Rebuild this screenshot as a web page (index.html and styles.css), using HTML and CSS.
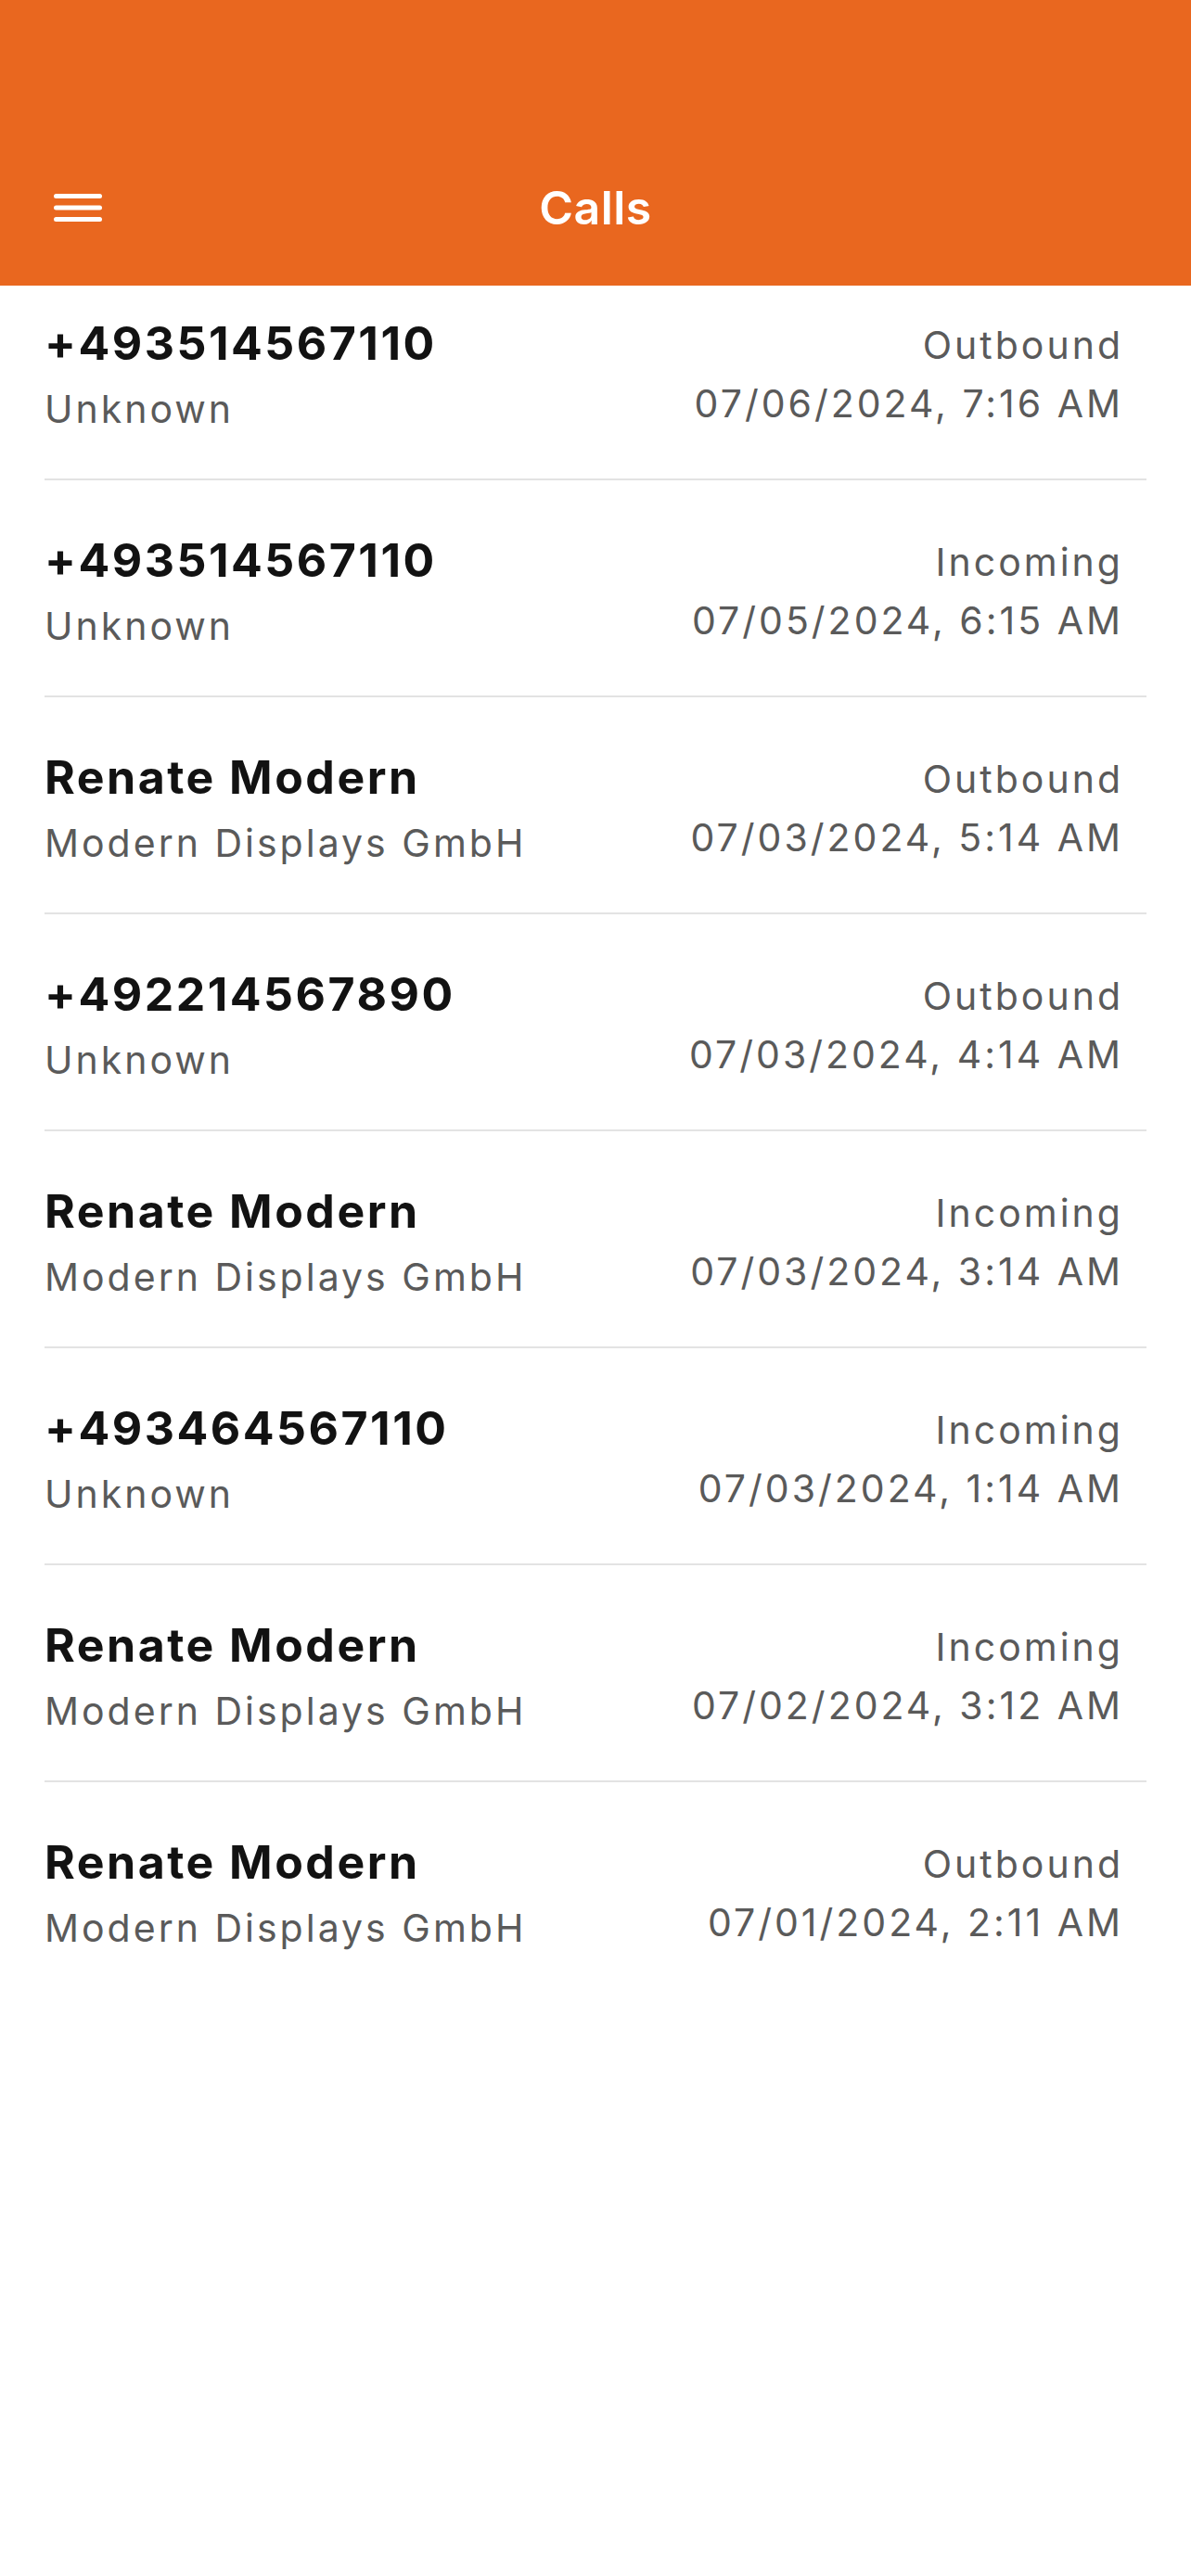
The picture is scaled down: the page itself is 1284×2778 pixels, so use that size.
FILE: index.html
```html
<!DOCTYPE html>
<html lang="en">
<head>
  <meta charset="UTF-8">
  <meta name="viewport" content="width=device-width, initial-scale=1.0">
  <title>Calls</title>
  <link rel="stylesheet" href="styles.css">
</head>
<body>
  <div class="app">
    <header class="toolbar">
      <div class="toolbar-inner">
        <button class="menu-btn" aria-label="Menu">
          <svg viewBox="0 0 52 30" width="52" height="30">
            <line x1="2.5" y1="2.5" x2="49.5" y2="2.5" />
            <line x1="2.5" y1="15" x2="49.5" y2="15" />
            <line x1="2.5" y1="27.5" x2="49.5" y2="27.5" />
          </svg>
        </button>
        <h1 class="title">Calls</h1>
      </div>
    </header>

    <!-- call log -->
    <div class="call-list">
      <div class="call-item">
        <div class="call-main">
          <div class="call-name">+493514567110</div>
          <div class="call-sub">Unknown</div>
        </div>
        <div class="call-meta">
          <div class="call-dir">Outbound</div>
          <div class="call-date">07/06/2024, 7:16 AM</div>
        </div>
      </div>
      <div class="call-item">
        <div class="call-main">
          <div class="call-name">+493514567110</div>
          <div class="call-sub">Unknown</div>
        </div>
        <div class="call-meta">
          <div class="call-dir">Incoming</div>
          <div class="call-date">07/05/2024, 6:15 AM</div>
        </div>
      </div>
      <div class="call-item">
        <div class="call-main">
          <div class="call-name">Renate Modern</div>
          <div class="call-sub">Modern Displays GmbH</div>
        </div>
        <div class="call-meta">
          <div class="call-dir">Outbound</div>
          <div class="call-date">07/03/2024, 5:14 AM</div>
        </div>
      </div>
      <div class="call-item">
        <div class="call-main">
          <div class="call-name">+492214567890</div>
          <div class="call-sub">Unknown</div>
        </div>
        <div class="call-meta">
          <div class="call-dir">Outbound</div>
          <div class="call-date">07/03/2024, 4:14 AM</div>
        </div>
      </div>
      <div class="call-item">
        <div class="call-main">
          <div class="call-name">Renate Modern</div>
          <div class="call-sub">Modern Displays GmbH</div>
        </div>
        <div class="call-meta">
          <div class="call-dir">Incoming</div>
          <div class="call-date">07/03/2024, 3:14 AM</div>
        </div>
      </div>
      <div class="call-item">
        <div class="call-main">
          <div class="call-name">+493464567110</div>
          <div class="call-sub">Unknown</div>
        </div>
        <div class="call-meta">
          <div class="call-dir">Incoming</div>
          <div class="call-date">07/03/2024, 1:14 AM</div>
        </div>
      </div>
      <div class="call-item">
        <div class="call-main">
          <div class="call-name">Renate Modern</div>
          <div class="call-sub">Modern Displays GmbH</div>
        </div>
        <div class="call-meta">
          <div class="call-dir">Incoming</div>
          <div class="call-date">07/02/2024, 3:12 AM</div>
        </div>
      </div>
      <div class="call-item last">
        <div class="call-main">
          <div class="call-name">Renate Modern</div>
          <div class="call-sub">Modern Displays GmbH</div>
        </div>
        <div class="call-meta">
          <div class="call-dir">Outbound</div>
          <div class="call-date">07/01/2024, 2:11 AM</div>
        </div>
      </div>
    </div>
  </div>
</body>
</html>
```

FILE: styles.css
```css
* { margin: 0; padding: 0; box-sizing: border-box; }
body { background-color: #ffffff; font-family: Inter, 'Noto Sans', sans-serif; color: #111111; }
.app { width: 1284px; min-height: 2778px; background-color: #ffffff; }

.toolbar { background-color: #e9671f; height: 308px; padding-top: 158px; }
.toolbar-inner { position: relative; height: 132px; display: flex; align-items: center; justify-content: center; }
.menu-btn { position: absolute; left: 58px; top: 51px; background: none; border: none; width: 52px; height: 30px; display: block; }
.menu-btn svg { display: block; }
.menu-btn line { stroke: #ffffff; stroke-width: 5; stroke-linecap: round; }
.title { color: #ffffff; font-size: 50px; font-weight: 600; line-height: 60px; letter-spacing: 0.5px; }

.call-list { display: flex; flex-direction: column; }
.call-item { display: flex; justify-content: space-between; align-items: flex-start; margin: 0 48px; padding: 56px 25px 50px 0; border-bottom: 2px solid #e3e3e3; }
.call-item:first-child { padding-top: 32px; }
.call-item.last { border-bottom: none; }
.call-name { font-size: 50px; font-weight: 700; line-height: 60px; letter-spacing: 2.5px; color: #121212; }
.call-sub { font-size: 41px; line-height: 50px; margin-top: 16px; letter-spacing: 3px; color: #5a5a5a; }
.call-meta { text-align: right; padding-top: 7px; }
.call-dir { font-size: 41px; line-height: 50px; letter-spacing: 3px; color: #5a5a5a; }
.call-date { font-size: 41px; line-height: 50px; margin-top: 13px; letter-spacing: 3px; color: #5a5a5a; }
```
